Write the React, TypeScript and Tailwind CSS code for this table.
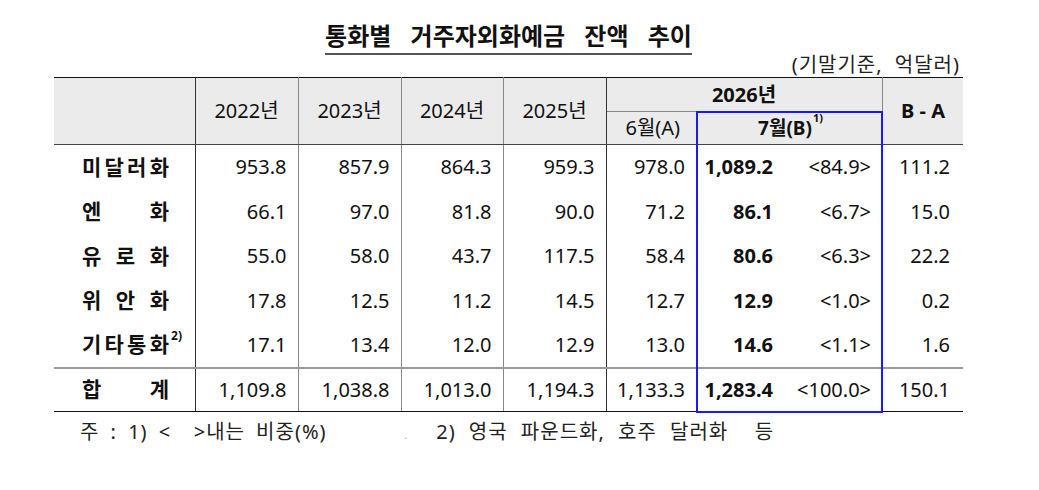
import React from 'react';

type Row = {
  label: string[];
  sup?: string;
  values: string[];
  b: string;
  share: string;
  diff: string;
};

const rows: Row[] = [
  { label: ['미', '달', '러', '화'], values: ['953.8', '857.9', '864.3', '959.3', '978.0'], b: '1,089.2', share: '<84.9>', diff: '111.2' },
  { label: ['엔', '화'], values: ['66.1', '97.0', '81.8', '90.0', '71.2'], b: '86.1', share: '<6.7>', diff: '15.0' },
  { label: ['유', '로', '화'], values: ['55.0', '58.0', '43.7', '117.5', '58.4'], b: '80.6', share: '<6.3>', diff: '22.2' },
  { label: ['위', '안', '화'], values: ['17.8', '12.5', '11.2', '14.5', '12.7'], b: '12.9', share: '<1.0>', diff: '0.2' },
  { label: ['기', '타', '통', '화'], sup: '2)', values: ['17.1', '13.4', '12.0', '12.9', '13.0'], b: '14.6', share: '<1.1>', diff: '1.6' },
];

const total: Row = {
  label: ['합', '계'],
  values: ['1,109.8', '1,038.8', '1,013.0', '1,194.3', '1,133.3'],
  b: '1,283.4',
  share: '<100.0>',
  diff: '150.1',
};

const font = { fontFamily: '"Noto Sans", "Noto Sans CJK KR", sans-serif' };

function Label({ row }: { row: Row }) {
  return (
    <div className="relative ml-[28px] flex w-[87px] justify-between text-[21px] font-bold">
      {row.label.map((c, i) => (
        <span key={i}>{c}</span>
      ))}
      {row.sup && (
        <sup className="absolute -right-[13px] top-[2px] text-[12px] font-bold">{row.sup}</sup>
      )}
    </div>
  );
}

function DataRow({ row, isTotal, height }: { row: Row; isTotal?: boolean; height: string }) {
  const edge = isTotal ? 'border-b-[1.5px] border-b-[#111]' : '';
  return (
    <tr className={`${height} ${isTotal ? 'border-t-[2px] border-t-[#9a9a9a]' : ''}`}>
      <td className={`border-r-[1.5px] border-r-[#333] p-0 ${edge}`}>
        <Label row={row} />
      </td>
      {row.values.map((v, i) => (
        <td
          key={i}
          className={`p-0 pr-[11px] text-right ${edge} ${
            i === 3 ? 'border-r border-r-[#333]' : i < 4 ? 'border-r border-r-[#888]' : ''
          }`}
        >
          {v}
        </td>
      ))}
      <td className={`border-l-2 border-l-[#1a1aff] p-0 pr-[13px] text-right font-bold ${isTotal ? 'border-b-2 border-b-[#1a1aff]' : ''}`}>
        {row.b}
      </td>
      <td className={`border-r-2 border-r-[#1a1aff] p-0 pr-[10px] text-right ${isTotal ? 'border-b-2 border-b-[#1a1aff]' : ''}`}>
        {row.share}
      </td>
      <td className={`p-0 pr-[13px] text-right ${edge}`}>{row.diff}</td>
    </tr>
  );
}

export default function App() {
  return (
    <div className="min-h-screen bg-white text-[#111]" style={font}>
      <div className="ml-[54px] w-[909px] pt-[20px]">
        <h1 className="text-center text-[24px] font-bold leading-[32px]">
          <span className="border-b-[2px] border-[#555] pb-[1px] [word-spacing:13px]">
            통화별 거주자외화예금 잔액 추이
          </span>
        </h1>
        <p className="mt-[1px] pr-[3px] text-right text-[20px] leading-[24px] tracking-[1px] text-[#222] [word-spacing:6px]">
          (기말기준, 억달러)
        </p>
        <table className="w-[909px] table-fixed border-collapse text-[20px] leading-none">
          <colgroup>
            <col className="w-[141px]" />
            <col className="w-[103px]" />
            <col className="w-[103px]" />
            <col className="w-[102px]" />
            <col className="w-[103px]" />
            <col className="w-[91px]" />
            <col className="w-[89px]" />
            <col className="w-[96px]" />
            <col className="w-[81px]" />
          </colgroup>
          <thead className="bg-[#ebebeb]">
            <tr className="h-[34px] border-t-[1.5px] border-t-[#111]">
              <th rowSpan={2} className="border-r-[1.5px] border-r-[#333] border-b border-b-[#444]" />
              {['2022', '2023', '2024', '2025'].map((y, i) => (
                <th
                  key={y}
                  rowSpan={2}
                  className={`border-b border-b-[#444] font-normal ${
                    i === 3 ? 'border-r border-r-[#333]' : 'border-r border-r-[#888]'
                  }`}
                >
                  {y}년
                </th>
              ))}
              <th colSpan={3} className="border-b border-b-[#888] pt-[2px] font-bold">
                2026년
              </th>
              <th rowSpan={2} className="border-b border-b-[#444] border-l border-l-[#888] font-bold">
                B - A
              </th>
            </tr>
            <tr className="h-[33px]">
              <th className="border-b border-b-[#444] pl-[3px] font-normal">6월(A)</th>
              <th
                colSpan={2}
                className="border-x-2 border-t-2 border-[#1a1aff] border-b border-b-[#444] pl-[2px] text-[19px] font-bold"
              >
                7월(B)<sup className="ml-[1px] align-[7px] text-[11px]">1)</sup>
              </th>
            </tr>
          </thead>
          <tbody>
            {rows.map((r, i) => (
              <DataRow key={i} row={r} height={i % 2 === 0 ? 'h-[45px]' : 'h-[44px]'} />
            ))}
            <DataRow row={total} isTotal height="h-[44px]" />
          </tbody>
        </table>
        <div className="flex items-baseline pt-[6px] text-[20px] leading-[26px] tracking-[1px] text-[#222]">
          <span className="ml-[26px] whitespace-pre [word-spacing:5px]">주 : 1) {'<'}  {'>'}내는 비중(%)</span>
          <span className="ml-[78px] text-[10px] text-[#aaa]">.</span>
          <span className="ml-[28px] whitespace-pre [word-spacing:7px]">2) 영국 파운드화, 호주 달러화  등</span>
        </div>
      </div>
    </div>
  );
}
